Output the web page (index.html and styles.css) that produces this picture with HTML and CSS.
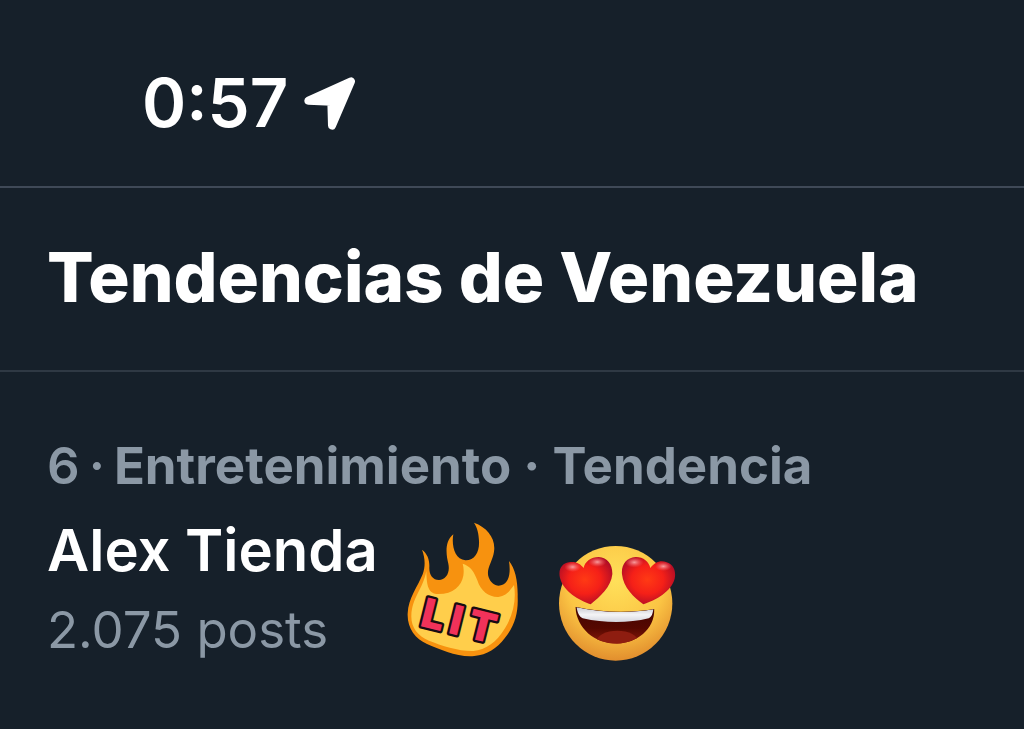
FILE: index.html
```html
<!DOCTYPE html>
<html lang="es">
  <head>
    <meta charset="UTF-8" />
    <meta name="viewport" content="width=device-width, initial-scale=1.0" />
    <title>Tendencias de Venezuela</title>

    <link rel="stylesheet" href="styles.css">
  </head>
  <body>
    <div class="status-bar">
      <span class="time">0:57</span>
      <svg class="location" viewBox="0 0 156 159" aria-hidden="true">
        <path d="M13 71 L141 13 L84 146 L82 74 Z" />
      </svg>
    </div>

    <header class="page-header">
      <h1>Tendencias de Venezuela</h1>
    </header>

    <main class="trend">
      <p class="meta">
        <span class="rank">6</span>
        <span class="rank">·</span>
        <span>Entretenimiento · Tendencia</span>
      </p>
      <div class="trend-body">
        <div class="trend-text">
          <h2>Alex Tienda</h2>
          <p class="posts">2.075 posts</p>
        </div>

        <svg class="flame" viewBox="21 18 333 420" role="img" aria-label="LIT">
          <path fill="#f7920f" d="M222 20 C262 34 288 68 282 107 C278 137 257 158 266 184 C272 202 287 212 303 208 C329 201 332 168 327 135 C346 158 354 197 353 243 C355 290 345 328 314 367 C290 398 262 417 223 420 C175 425 120 400 81 384 C45 368 21 335 23 292 C25 246 53 212 68 175 C77 151 75 124 66 101 C83 114 89 132 88 154 C87 176 98 192 117 192 C137 191 151 172 145 143 C139 119 132 77 160 55 C154 88 164 130 196 133 C224 134 239 107 237 75 C236 52 232 36 222 20 Z" />
          <path fill="#ffce4b" d="M79 165 C80 201 82 231 110 234 C158 236 184 211 190 179 C192 165 191 154 188 143 C211 150 223 168 232 193 C243 227 267 244 295 243 C322 239 330 222 342 207 C349 249 341 294 315 337 C289 380 257 402 220 405 C177 406 125 389 87 374 C52 359 33 334 34 299 C36 244 69 219 79 165 Z" />
          <g class="lit" transform="translate(52 328) rotate(14)">
            <text x="40">L</text>
            <text x="110">I</text>
            <text x="190">T</text>
          </g>
        </svg>

        <svg class="heart-eyes" viewBox="27 27 351 351" role="img" aria-label="Cara con ojos de corazón">
          <defs>
            <radialGradient id="face" cx="50%" cy="30%" r="72%">
              <stop offset="0" stop-color="#ffe05a" />
              <stop offset="0.6" stop-color="#fbc544" />
              <stop offset="1" stop-color="#e08a2c" />
            </radialGradient>
            <radialGradient id="heart" cx="48%" cy="48%" r="60%">
              <stop offset="0" stop-color="#ff3a14" />
              <stop offset="0.5" stop-color="#f52018" />
              <stop offset="1" stop-color="#a80a28" />
            </radialGradient>
            <radialGradient id="shine">
              <stop offset="0" stop-color="#ffb3b3" stop-opacity="0.85" />
              <stop offset="1" stop-color="#ff6a6a" stop-opacity="0" />
            </radialGradient>
            <linearGradient id="mouth" x1="0" y1="0" x2="0" y2="1">
              <stop offset="0" stop-color="#3f0503" />
              <stop offset="0.6" stop-color="#560800" />
              <stop offset="1" stop-color="#8a1a0c" />
            </linearGradient>
            <linearGradient id="teeth" x1="0" y1="0" x2="0" y2="1">
              <stop offset="0" stop-color="#c9cbd2" />
              <stop offset="0.5" stop-color="#f4f4f6" />
              <stop offset="1" stop-color="#d3d4dc" />
            </linearGradient>
            <clipPath id="mouth-shape">
              <path d="M76 212 C155 230 239 231 313 219 C314 282 259 321 201 323 C134 322 80 278 76 212 Z" />
            </clipPath>
          </defs>
          <ellipse cx="197" cy="202" rx="170" ry="172" fill="url(#face)" />
          <g clip-path="url(#mouth-shape)">
            <rect x="70" y="205" width="250" height="120" fill="url(#mouth)" />
            <ellipse cx="202" cy="319" rx="63" ry="35" fill="#8e1d10" />
            <path fill="url(#teeth)" d="M80 214 C155 231 239 232 310 220 C308 235 304 243 296 247 C235 262 164 262 98 247 C88 243 82 230 80 214 Z" />
          </g>
          <path fill="url(#heart)" d="M122 205 C86 192 41 167 30 126 C24 101 35 82 57 79 C77 75 91 84 101 96 C104 77 124 63 146 63 C173 65 188 85 187 115 C183 154 150 182 122 205 Z" />
          <path fill="url(#heart)" d="M280 205 C251 184 220 155 216 115 C213 86 230 65 256 63 C279 62 297 77 301 96 C313 80 332 71 350 79 C370 85 379 105 374 128 C363 168 317 192 280 205 Z" />
          <ellipse cx="68" cy="93" rx="25" ry="15" fill="url(#shine)" />
          <ellipse cx="142" cy="78" rx="27" ry="15" fill="url(#shine)" />
          <ellipse cx="253" cy="79" rx="28" ry="16" fill="url(#shine)" />
          <ellipse cx="340" cy="91" rx="25" ry="14" fill="url(#shine)" />
        </svg>
      </div>
    </main>
  </body>
</html>
```

FILE: styles.css
```css
* {
  box-sizing: border-box;
}

body {
  margin: 0;
  background-color: #16202a;
  color: #fff;
  font-family: Inter, "Liberation Sans", sans-serif;
}

h1,
h2,
p {
  margin: 0;
  white-space: nowrap;
}

.status-bar {
  display: flex;
  align-items: center;
  gap: 16px;
  height: 188px;
  padding: 20px 142px 0;
  border-bottom: 2px solid #3f4957;
}

.time {
  font-size: 67px;
  font-weight: 600;
  line-height: 80px;
}

.location {
  width: 52px;
  height: 53px;
  fill: #fff;
  stroke: #fff;
  stroke-width: 24px;
  stroke-linejoin: round;
}

.page-header {
  padding: 48px 47px 52px;
  border-bottom: 2px solid #2f3944;
}

.page-header h1 {
  font-size: 69px;
  font-weight: 800;
  line-height: 82px;
}

.trend {
  padding: 64px 47px;
}

.meta {
  display: flex;
  gap: 9px;
  color: #8b98a5;
  font-size: 51px;
  font-weight: 700;
  line-height: 60px;
}

.rank {
  font-weight: 600;
}

.trend-body {
  display: flex;
  align-items: flex-end;
  margin-top: 22px;
}

.trend-text {
  align-self: flex-start;
}

.trend-text h2 {
  font-size: 58px;
  font-weight: 600;
  line-height: 64px;
}

.posts {
  margin-top: 16px;
  color: #8b98a5;
  font-size: 51px;
  line-height: 64px;
}

.flame {
  width: 111px;
  height: 140px;
  margin-left: 29px;
}

.lit {
  fill: #f0325a;
  stroke: #160c12;
  stroke-width: 14px;
  stroke-linejoin: round;
  paint-order: stroke;
  font-size: 122px;
  font-weight: 900;
  text-anchor: middle;
}

.heart-eyes {
  width: 117px;
  height: 117px;
  margin-left: 41px;
}
```
